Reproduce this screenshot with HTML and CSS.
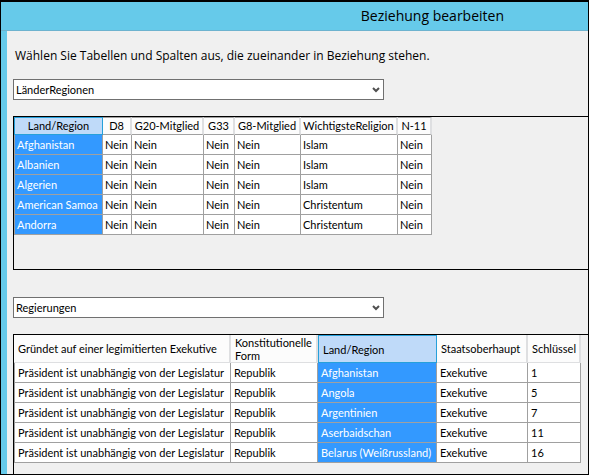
FILE: index.html
```html
<!DOCTYPE html>
<html lang="de">
<head>
  <meta charset="UTF-8">
  <meta name="viewport" content="width=device-width, initial-scale=1.0">
  <title>Beziehung bearbeiten</title>
  <link rel="stylesheet" href="styles.css">
</head>
<body>
  <div class="window">
    <header class="title-bar">
      <h1>Beziehung bearbeiten</h1>
    </header>

    <main class="content">
      <p class="intro">Wählen Sie Tabellen und Spalten aus, die zueinander in Beziehung stehen.</p>

      <div class="select-wrapper">
        <select class="select" aria-label="Erste Tabelle">
          <option>LänderRegionen</option>
          <option>Regierungen</option>
        </select>
        <svg class="chevron" viewBox="0 0 8 6" aria-hidden="true"><path d="M1 1l3 3 3-3" /></svg>
      </div>

      <div class="panel panel-first">
        <table class="grid grid-compact">
          <colgroup>
            <col class="col-country">
            <col class="col-d8">
            <col class="col-g20">
            <col class="col-g33">
            <col class="col-g8">
            <col class="col-religion">
            <col class="col-n11">
          </colgroup>
          <thead>
            <tr>
              <th class="selected">Land/Region</th>
              <th>D8</th>
              <th>G20-Mitglied</th>
              <th>G33</th>
              <th>G8-Mitglied</th>
              <th>WichtigsteReligion</th>
              <th>N-11</th>
            </tr>
          </thead>
          <tbody>
            <tr><td class="selected">Afghanistan</td><td>Nein</td><td>Nein</td><td>Nein</td><td>Nein</td><td>Islam</td><td>Nein</td></tr>
            <tr><td class="selected">Albanien</td><td>Nein</td><td>Nein</td><td>Nein</td><td>Nein</td><td>Islam</td><td>Nein</td></tr>
            <tr><td class="selected">Algerien</td><td>Nein</td><td>Nein</td><td>Nein</td><td>Nein</td><td>Islam</td><td>Nein</td></tr>
            <tr><td class="selected">American Samoa</td><td>Nein</td><td>Nein</td><td>Nein</td><td>Nein</td><td>Christentum</td><td>Nein</td></tr>
            <tr><td class="selected">Andorra</td><td>Nein</td><td>Nein</td><td>Nein</td><td>Nein</td><td>Christentum</td><td>Nein</td></tr>
          </tbody>
        </table>
      </div>

      <div class="select-wrapper">
        <select class="select" aria-label="Zweite Tabelle">
          <option>Regierungen</option>
          <option>LänderRegionen</option>
        </select>
        <svg class="chevron" viewBox="0 0 8 6" aria-hidden="true"><path d="M1 1l3 3 3-3" /></svg>
      </div>

      <div class="panel panel-second">
        <table class="grid grid-wide">
          <colgroup>
            <col class="col-executive">
            <col class="col-form">
            <col class="col-region">
            <col class="col-head">
            <col class="col-key">
          </colgroup>
          <thead>
            <tr>
              <th>Gründet auf einer legimitierten Exekutive</th>
              <th>Konstitutionelle Form</th>
              <th class="selected">Land/Region</th>
              <th>Staatsoberhaupt</th>
              <th>Schlüssel</th>
            </tr>
          </thead>
          <tbody>
            <tr><td>Präsident ist unabhängig von der Legislatur</td><td>Republik</td><td class="selected">Afghanistan</td><td>Exekutive</td><td>1</td></tr>
            <tr><td>Präsident ist unabhängig von der Legislatur</td><td>Republik</td><td class="selected">Angola</td><td>Exekutive</td><td>5</td></tr>
            <tr><td>Präsident ist unabhängig von der Legislatur</td><td>Republik</td><td class="selected">Argentinien</td><td>Exekutive</td><td>7</td></tr>
            <tr><td>Präsident ist unabhängig von der Legislatur</td><td>Republik</td><td class="selected">Aserbaidschan</td><td>Exekutive</td><td>11</td></tr>
            <tr><td>Präsident ist unabhängig von der Legislatur</td><td>Republik</td><td class="selected">Belarus (Weißrussland)</td><td>Exekutive</td><td>16</td></tr>
          </tbody>
        </table>
      </div>
    </main>
  </div>
</body>
</html>
```
FILE: styles.css
```css
:root {
  --frame-color: #66caea;
  --bg-color: #f0f0f0;
  --text-color: #000;
  --line-color: #a0a0a0;
  --header-line: #dedfe1;
  --header-bg: #fcfcfc;
  --selected-bg: #3399ff;
  --selected-header: #bfdaf9;
  --selected-border: #26a0da;
}

* {
  margin: 0;
  padding: 0;
  box-sizing: border-box;
}

body {
  font-family: "Segoe UI", "Open Sans", "Noto Sans", sans-serif;
  font-size: 12px;
  color: var(--text-color);
}

/* Window frame */
.window {
  display: flex;
  flex-direction: column;
  min-height: 100vh;
  overflow: hidden;
  border: 1px solid #000;
  border-top-width: 2px;
  background-color: var(--frame-color);
}

.title-bar {
  padding: 4px 84px 4px 0;
  border-bottom: 1px solid #6db3cf;
  text-align: right;
}

.title-bar h1 {
  font-size: 14px;
  font-weight: 400;
  line-height: 20px;
}

.content {
  flex: 1;
  display: flex;
  flex-direction: column;
  margin-left: 6px;
  padding: 15px 0 0 6px;
  background-color: var(--bg-color);
}

.intro {
  margin-bottom: 13px;
  padding-left: 2px;
  line-height: 20px;
}

/* Drop-downs */
.select-wrapper {
  position: relative;
  width: 100%;
  max-width: 371px;
}

.select {
  display: block;
  width: 100%;
  height: 21px;
  padding: 0 20px 0 2px;
  border: 1px solid #707070;
  border-radius: 0;
  background-color: #fff;
  color: inherit;
  font-family: Lato, sans-serif;
  font-size: 11px;
  appearance: none;
}

.chevron {
  position: absolute;
  top: 8px;
  right: 4px;
  width: 8px;
  height: 6px;
  fill: none;
  stroke: #505050;
  stroke-width: 2;
  pointer-events: none;
}

/* Table panels, cut off by the right edge of the window */
.panel {
  margin-top: 16px;
  border: 1px solid #000;
  border-right: 0;
}

.panel-first {
  margin-bottom: 27px;
  padding-bottom: 34px;
}

.panel-second {
  flex: 1;
  padding-bottom: 10px;
  border-bottom: 0;
}

.grid {
  table-layout: fixed;
  border-collapse: separate;
  border-spacing: 0;
  font-family: Lato, sans-serif;
  font-size: 11px;
  line-height: 14px;
  white-space: nowrap;
}

.grid-compact {
  width: 418px;
}

.grid-wide {
  width: 567px;
}

.grid th {
  border-right: 2px solid var(--header-line);
  background-color: var(--header-bg);
  font-weight: 400;
}

.grid td {
  height: 20px;
  padding: 0 2px;
  border-right: 1px solid var(--line-color);
  border-bottom: 1px solid var(--line-color);
  background-color: #fff;
}

.grid td:first-child {
  border-left: 1px solid var(--line-color);
}

.grid .selected {
  background-color: var(--selected-bg);
  color: #fff;
}

.grid th.selected {
  border: 1px solid var(--selected-border);
  background-color: var(--selected-header);
  color: var(--text-color);
}

.grid-compact th {
  height: 18px;
  border-top: 1px solid var(--line-color);
  border-bottom: 1px solid var(--line-color);
  text-align: center;
}

.grid-wide th {
  height: 28px;
  padding: 0 4px;
  border-bottom: 1px solid var(--header-line);
  line-height: 13px;
  text-align: left;
  white-space: normal;
}

.grid-wide td {
  padding: 0 3px;
}

/* Column widths */
.col-country { width: 89px; }
.col-d8 { width: 29px; }
.col-g20 { width: 72px; }
.col-g33 { width: 31px; }
.col-g8 { width: 66px; }
.col-religion { width: 97px; }
.col-n11 { width: 34px; }

.col-executive { width: 217px; }
.col-form { width: 87px; }
.col-region { width: 119px; }
.col-head { width: 91px; }
.col-key { width: 53px; }
```
